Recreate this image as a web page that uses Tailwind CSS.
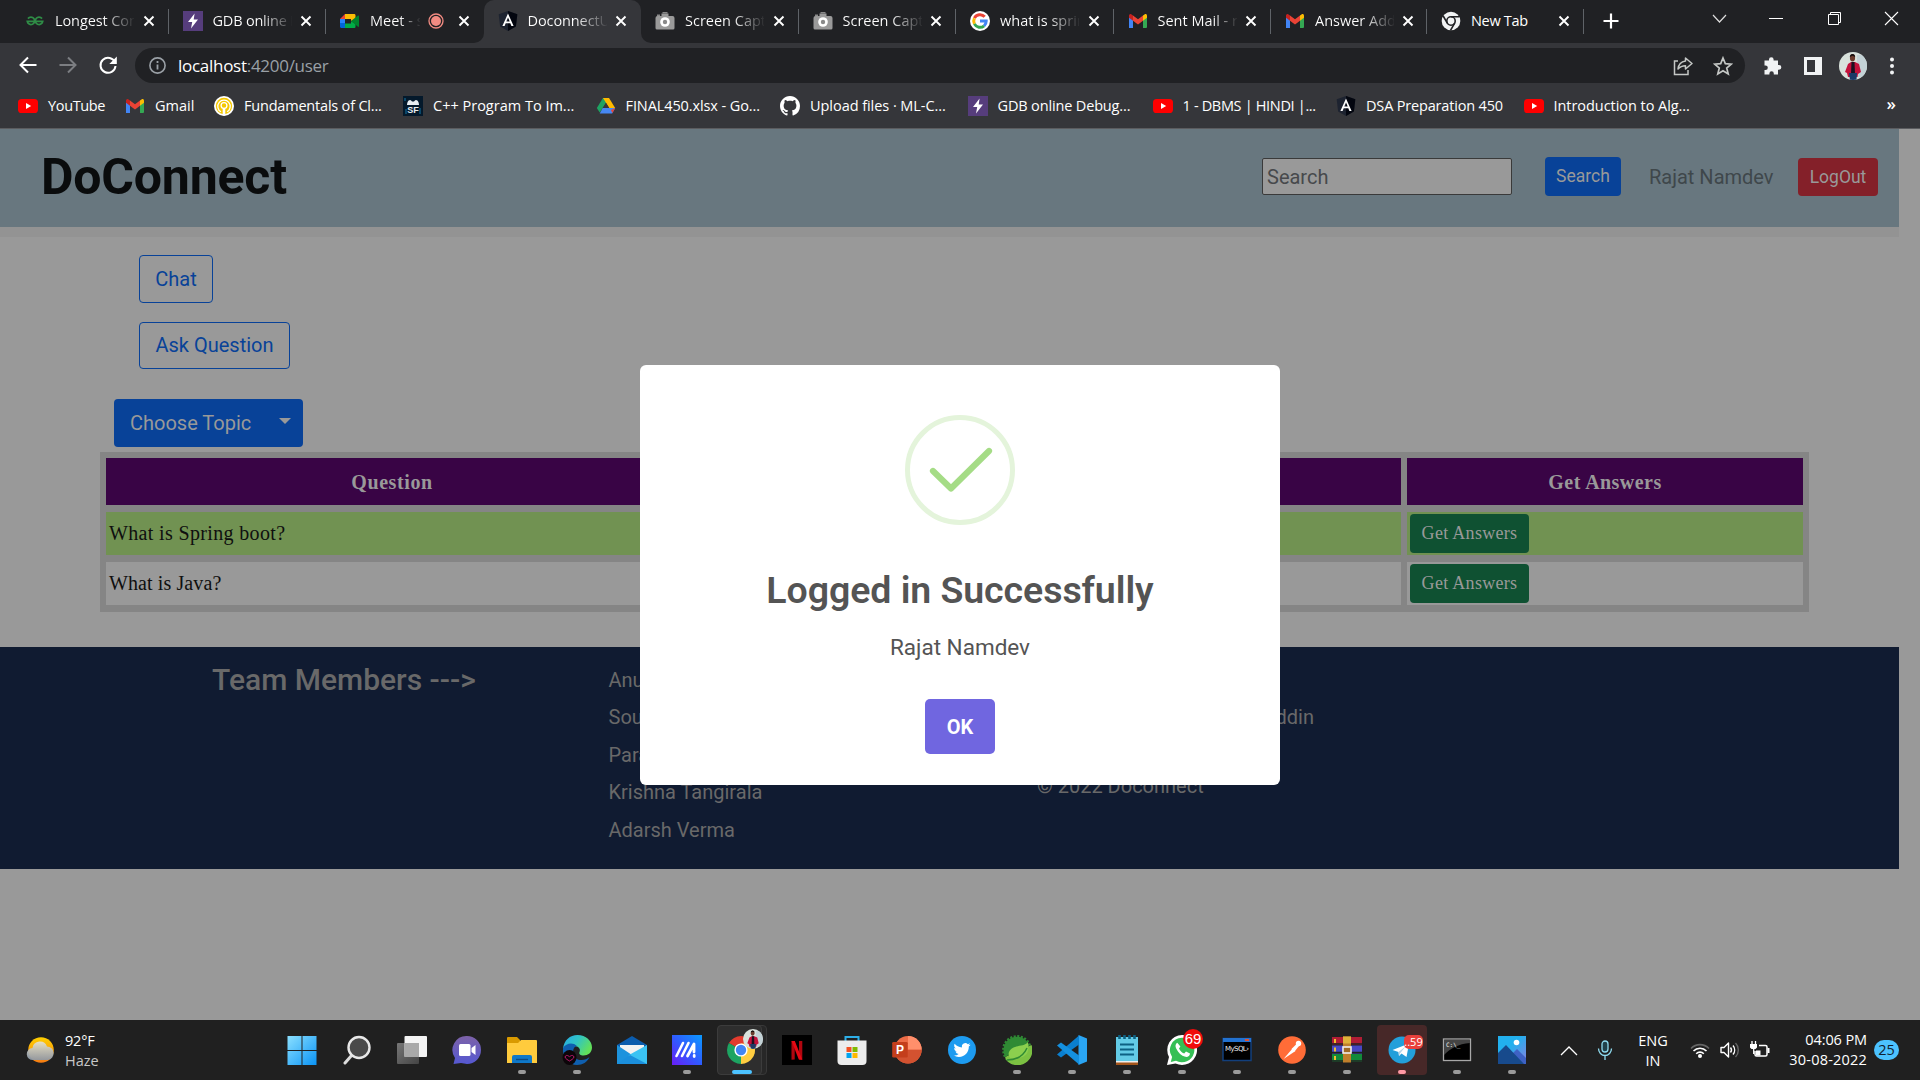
<!DOCTYPE html>
<html lang="en">
<head>
<meta charset="utf-8">
<title>DoconnectUI</title>
<script src="https://cdn.jsdelivr.net/npm/@tailwindcss/browser@4"></script>
</head>
<body class="w-[1920px] h-[1080px] overflow-hidden bg-[#999999] font-['Roboto',sans-serif] flex flex-col">

<svg class="hidden">
  <symbol id="x" viewBox="0 0 12 12"><path d="M1.500 1.500l9 9M10.500 1.500l-9 9" stroke="#fff" stroke-width="1.900" fill="none"/></symbol>
  <symbol id="gfg" viewBox="0 0 20 20"><path d="M3 7.600A3.700 3.700 0 1 1 2.300 10.400H17.700A3.700 3.700 0 1 1 17 7.600" fill="none" stroke="#2f8d46" stroke-width="1.800"/></symbol>
  <symbol id="bolt" viewBox="0 0 20 20"><path d="M0 0h20v20H0z" fill="#563d7c"/><path d="M11.600 2.500L5 11h4.200L8 17.500 15 8.600h-4.300z" fill="#fff"/></symbol>
  <symbol id="meet" viewBox="0 0 20 20"><path d="M5 3v5H0z" fill="#ea4335"/><path d="M5 3h9c1 0 1.500.5 1.500 1.500V8L11 10V8H5z" fill="#fbbc04"/><path d="M0 8h5v4.500H0z" fill="#2684fc"/><path d="M0 12h5v5H1.500C.6 17 0 16.400 0 15.500z" fill="#0066da"/><path d="M5 12.500h6V10l4.500 3v2.500c0 1-.5 1.500-1.500 1.500H5z" fill="#00ac47"/><path d="M11 10l7-5.500c.4-.3 1 0 1 .5v10.300c0 .5-.6.800-1 .5z" fill="#00832d"/></symbol>
  <symbol id="ng" viewBox="0 0 20 20"><path d="M10 0l9.300 3.300-1.400 12.200L10 20l-7.900-4.500L.7 3.300z" fill="#1d2330"/><path d="M10 0l9.300 3.300-1.400 12.200L10 20z" fill="#03060f"/><path d="M10 2.500L4.400 15h2.200l1.100-2.800h4.600l1.100 2.800h2.200zm0 4l1.700 4H8.300z" fill="#fff"/></symbol>
  <symbol id="cam" viewBox="0 0 20 20"><path d="M6.500 2.500h7V5h4a2 2 0 0 1 2 2v10a1.500 1.500 0 0 1-1.500 1.500H2A1.500 1.500 0 0 1 .5 17V7a2 2 0 0 1 2-2h4z" fill="#9a9a9a"/><circle cx="10" cy="11" r="4.800" fill="#fff"/><circle cx="10" cy="11" r="2.200" fill="#8a8a8a"/><path d="M7.500 1h5v1.500h-5zM2 3.600h3V5H2z" fill="#888"/></symbol>
  <symbol id="goog" viewBox="0 0 20 20"><circle cx="10" cy="10" r="10" fill="#fff"/><g fill="none" stroke-width="3"><path d="M14.700 5.800A6.300 6.300 0 0 0 4.400 7.200" stroke="#ea4335"/><path d="M4.400 7.200a6.300 6.300 0 0 0 0 5.700" stroke="#fbbc05"/><path d="M4.400 12.900a6.300 6.300 0 0 0 9.700 1.900" stroke="#34a853"/><path d="M14.100 14.800A6.300 6.300 0 0 0 16.200 10H10" stroke="#4285f4"/></g></symbol>
  <symbol id="gmail" viewBox="0 0 20 20"><path d="M1 17V5.500l4 3V17H2z" fill="#4285f4"/><path d="M15 17V8.500l4-3V16a1 1 0 0 1-1 1z" fill="#34a853"/><path d="M15 4.500l1.500-1.100c1.200-.8 2.500 0 2.500 1.300v2l-4 3z" fill="#fbbc04"/><path d="M5 9.700V4.500l5 3.800 5-3.800v5.200l-5 3.800z" fill="#ea4335"/><path d="M1 6.700v-2c0-1.300 1.400-2.200 2.500-1.300L5 4.500v5.200z" fill="#c5221f"/></symbol>
  <symbol id="chr" viewBox="0 0 20 20"><circle cx="10" cy="10" r="9.300" fill="#f1f3f4"/><circle cx="10" cy="10" r="4.200" fill="none" stroke="#202124" stroke-width="1.600"/><path d="M10 5.800h8.300M6.300 12.100L2.200 5M13.700 12.100L9.500 19.300" stroke="#202124" stroke-width="1.600"/></symbol>
  <symbol id="yt" viewBox="0 0 20 20"><rect y="3" width="20" height="14" rx="3.600" fill="#f00"/><path d="M8 7l5.200 3L8 13z" fill="#fff"/></symbol>
  <symbol id="fund" viewBox="0 0 20 20"><circle cx="10" cy="10" r="10" fill="#fff"/><circle cx="10" cy="10" r="8.200" fill="#f5c800"/><path d="M7 15.800A6.200 6.200 0 1 1 13 15.800" fill="none" stroke="#fff" stroke-width="1.300"/><circle cx="10" cy="9.500" r="2.900" fill="#f5c800" stroke="#fff" stroke-width="1.300"/><path d="M10 12v7.500" stroke="#fff" stroke-width="2.600"/></symbol>
  <symbol id="sf" viewBox="0 0 20 20"><path d="M0 0h20v20H0z" fill="#04192b"/><path d="M1 2h2v3H1zM16 12h2v6h-2zM2 13h2v5H2z" fill="#0a4768"/><path d="M4 9c0-2 1-5 3-5 1 0 2 1.500 2 1.500h2S12 4 13 4c2 0 3 3 3 5z" fill="#e8eef2"/><text x="10" y="16.800" font-family="Liberation Sans" font-weight="bold" font-size="9" fill="#e8eef2" text-anchor="middle">SF</text></symbol>
  <symbol id="drive" viewBox="0 0 20 20"><path d="M7 2h6l-6 9.500-3.300 5L.8 12z" fill="#1ea362"/><path d="M7 2h6l6.200 10h-6z" fill="#ffba00"/><path d="M3.700 17.500l3-5.500h12.500l-3 5.500z" fill="#4688f4"/><path d="M10 6.800l3.200 5.200H6.800z" fill="#35363a"/><path d="M15 14l4.200-2-2.800 5z" fill="#ea4335"/></symbol>
  <symbol id="gh" viewBox="0 0 16 16"><path fill="#fff" d="M8 0C3.580 0 0 3.580 0 8c0 3.540 2.290 6.530 5.470 7.590.4.070.55-.17.55-.38 0-.19-.01-.82-.01-1.490-2.010.37-2.530-.49-2.690-.94-.09-.23-.48-.94-.82-1.130-.28-.15-.68-.52-.01-.53.63-.01 1.080.58 1.230.82.72 1.210 1.870.87 2.330.66.07-.52.28-.87.51-1.070-1.780-.2-3.640-.89-3.640-3.950 0-.87.31-1.590.82-2.150-.08-.2-.36-1.020.08-2.120 0 0 .67-.21 2.200.82.64-.18 1.320-.27 2-.27s1.360.09 2 .27c1.530-1.040 2.200-.82 2.200-.82.44 1.100.16 1.920.08 2.120.51.56.82 1.270.82 2.150 0 3.070-1.870 3.750-3.650 3.950.29.25.54.73.54 1.480 0 1.070-.01 1.930-.01 2.200 0 .21.15.46.55.38A8.010 8.010 0 0 0 16 8c0-4.420-3.580-8-8-8z"/></symbol>
  <symbol id="man" viewBox="0 0 28 28"><path d="M0 0h28v28H0z" fill="#d9e2dc"/><path d="M18 3h10v22H18z" fill="#c3d2d6"/><path d="M9 12l3-2h4l4 2 2 8-3 2-.5 3H9l-1-4-2-1z" fill="#c3123b"/><path d="M12.500 10h3l.5 12h-4z" fill="#1c1020"/><path d="M10 21h8l-.5 7H11z" fill="#1b3a66"/><ellipse cx="13.500" cy="5.800" rx="2.600" ry="3.800" fill="#6b3b2c"/><path d="M10.800 5c0-4 5.400-4 5.400 0l-2.700-1.200z" fill="#150e0e"/></symbol>
</svg>

<!-- Tab strip -->
<div class="h-[43px] shrink-0 bg-[#202124] flex pl-[11px] font-['Open_Sans',sans-serif] text-[14.500px] text-white">
  <div class="w-[157.500px] h-[42px] shrink-0 flex items-center pl-[14px] relative">
    <svg class="size-5 shrink-0"><use href="#gfg"/></svg>
    <span class="ml-[10px] w-[79px] overflow-hidden whitespace-nowrap tracking-[-.1px] bg-clip-text text-transparent bg-linear-to-r from-white from-60% to-white/5">Longest Com</span>
    <svg class="size-3 absolute left-[131.500px]"><use href="#x"/></svg>
    <div class="absolute right-0 top-[9px] w-px h-[25px] bg-[#5f6368]"></div>
  </div>
  <div class="w-[157.500px] h-[42px] shrink-0 flex items-center pl-[14px] relative">
    <svg class="size-5 shrink-0"><use href="#bolt"/></svg>
    <span class="ml-[10px] w-[79px] overflow-hidden whitespace-nowrap tracking-[-.2px] bg-clip-text text-transparent bg-linear-to-r from-white from-60% to-white/5">GDB online D</span>
    <svg class="size-3 absolute left-[131.500px]"><use href="#x"/></svg>
    <div class="absolute right-0 top-[9px] w-px h-[25px] bg-[#5f6368]"></div>
  </div>
  <div class="w-[157.500px] h-[42px] shrink-0 flex items-center pl-[14px] relative">
    <svg class="size-5 shrink-0"><use href="#meet"/></svg>
    <span class="ml-[10px] w-[50px] overflow-hidden whitespace-nowrap bg-clip-text text-transparent bg-linear-to-r from-white from-60% to-white/5">Meet - s</span>
    <svg class="size-4 absolute left-[102px]" viewBox="0 0 16 16"><circle cx="8" cy="8" r="7" fill="none" stroke="#f28b82" stroke-width="1.300"/><circle cx="8" cy="8" r="5" fill="#f28b82"/></svg>
    <svg class="size-3 absolute left-[131.500px]"><use href="#x"/></svg>
  </div>
  <div class="w-[157.500px] shrink-0 relative bg-[#35363a] rounded-t-[10px] flex items-center pl-[14px] pb-px">
    <svg class="absolute bottom-0 -left-[10px] size-[10px]" viewBox="0 0 10 10"><path d="M10 0v10H0A10 10 0 0 0 10 0z" fill="#35363a"/></svg>
    <svg class="absolute bottom-0 -right-[10px] size-[10px]" viewBox="0 0 10 10"><path d="M0 0v10h10A10 10 0 0 1 0 0z" fill="#35363a"/></svg>
    <svg class="size-5 shrink-0"><use href="#ng"/></svg>
    <span class="ml-[10px] w-[79px] overflow-hidden whitespace-nowrap tracking-[-.1px] bg-clip-text text-transparent bg-linear-to-r from-white from-60% to-white/5">DoconnectUI</span>
    <svg class="size-3 absolute left-[131.500px]"><use href="#x"/></svg>
  </div>
  <div class="w-[157.500px] h-[42px] shrink-0 flex items-center pl-[14px] relative">
    <svg class="size-5 shrink-0"><use href="#cam"/></svg>
    <span class="ml-[10px] w-[79px] overflow-hidden whitespace-nowrap bg-clip-text text-transparent bg-linear-to-r from-white from-60% to-white/5">Screen Capt</span>
    <svg class="size-3 absolute left-[131.500px]"><use href="#x"/></svg>
    <div class="absolute right-0 top-[9px] w-px h-[25px] bg-[#5f6368]"></div>
  </div>
  <div class="w-[157.500px] h-[42px] shrink-0 flex items-center pl-[14px] relative">
    <svg class="size-5 shrink-0"><use href="#cam"/></svg>
    <span class="ml-[10px] w-[79px] overflow-hidden whitespace-nowrap bg-clip-text text-transparent bg-linear-to-r from-white from-60% to-white/5">Screen Capt</span>
    <svg class="size-3 absolute left-[131.500px]"><use href="#x"/></svg>
    <div class="absolute right-0 top-[9px] w-px h-[25px] bg-[#5f6368]"></div>
  </div>
  <div class="w-[157.500px] h-[42px] shrink-0 flex items-center pl-[14px] relative">
    <svg class="size-5 shrink-0"><use href="#goog"/></svg>
    <span class="ml-[10px] w-[79px] overflow-hidden whitespace-nowrap bg-clip-text text-transparent bg-linear-to-r from-white from-60% to-white/5">what is sprin</span>
    <svg class="size-3 absolute left-[131.500px]"><use href="#x"/></svg>
    <div class="absolute right-0 top-[9px] w-px h-[25px] bg-[#5f6368]"></div>
  </div>
  <div class="w-[157.500px] h-[42px] shrink-0 flex items-center pl-[14px] relative">
    <svg class="size-5 shrink-0"><use href="#gmail"/></svg>
    <span class="ml-[10px] w-[79px] overflow-hidden whitespace-nowrap bg-clip-text text-transparent bg-linear-to-r from-white from-70% to-white/5">Sent Mail - r</span>
    <svg class="size-3 absolute left-[131.500px]"><use href="#x"/></svg>
    <div class="absolute right-0 top-[9px] w-px h-[25px] bg-[#5f6368]"></div>
  </div>
  <div class="w-[156px] h-[42px] shrink-0 flex items-center pl-[14px] relative">
    <svg class="size-5 shrink-0"><use href="#gmail"/></svg>
    <span class="ml-[10px] w-[79px] overflow-hidden whitespace-nowrap bg-clip-text text-transparent bg-linear-to-r from-white from-60% to-white/5">Answer Add</span>
    <svg class="size-3 absolute left-[130.500px]"><use href="#x"/></svg>
    <div class="absolute right-0 top-[9px] w-px h-[25px] bg-[#5f6368]"></div>
  </div>
  <div class="w-[157px] h-[42px] shrink-0 flex items-center pl-[14px] relative">
    <svg class="size-5 shrink-0"><use href="#chr"/></svg>
    <span class="ml-[10px] whitespace-nowrap tracking-[-.3px]">New Tab</span>
    <svg class="size-3 absolute left-[131px]"><use href="#x"/></svg>
    <div class="absolute right-0 top-[9px] w-px h-[25px] bg-[#5f6368]"></div>
  </div>
  <div class="flex items-center pl-[19px] h-[42px]"><svg class="size-4" viewBox="0 0 16 16"><path d="M8 .5v15M.5 8h15" stroke="#fff" stroke-width="2.200"/></svg></div>
  <div class="flex-1 flex justify-end h-[37px] items-center pr-[21px] gap-[42.500px]">
    <svg class="size-[15px]" viewBox="0 0 15 15"><path d="M1 4l6.500 7L14 4" fill="none" stroke="#ddd" stroke-width="1.200"/></svg>
    <svg class="size-[15px]" viewBox="0 0 15 15"><path d="M0 7.500h14" stroke="#fff"/></svg>
    <svg class="size-[15px]" viewBox="0 0 15 15"><path d="M1.500 3.500h10v10h-10zM3.500 3.500v-2h10v10h-2" fill="none" stroke="#fff"/></svg>
    <svg class="size-[15px]" viewBox="0 0 15 15"><path d="M1 1l13 13M14 1L1 14" stroke="#fff" stroke-width="1.100"/></svg>
  </div>
</div>

<!-- Toolbar -->
<div class="h-[45px] shrink-0 bg-[#35363a] flex items-center pl-[18px] font-['Open_Sans',sans-serif]">
  <svg class="size-5 -mt-[2px]" viewBox="0 0 20 20"><path d="M18.500 10H3M10 2.500L2.500 10l7.500 7.500" fill="none" stroke="#fff" stroke-width="2"/></svg>
  <svg class="size-5 ml-[20px] -mt-[2px]" viewBox="0 0 20 20"><path d="M1.500 10H17M10 2.500l7.500 7.500-7.500 7.500" fill="none" stroke="#7c7e82" stroke-width="2"/></svg>
  <svg class="size-5 ml-[20px] -mt-[2px]" viewBox="0 0 20 20"><path d="M17 7.500A7.500 7.500 0 1 0 17.500 11" fill="none" stroke="#fff" stroke-width="2"/><path d="M18.800 1.500v7.500h-7.500z" fill="#fff"/></svg>
  <div class="ml-[17px] w-[1610px] h-[35px] rounded-full bg-[#202124] flex items-center pl-[14px] pr-[12px]">
    <svg class="size-[17px]" viewBox="0 0 17 17"><circle cx="8.500" cy="8.500" r="7.600" fill="none" stroke="#9aa0a6" stroke-width="1.600"/><path d="M8.500 7.500v5M8.500 4v2" stroke="#9aa0a6" stroke-width="1.800"/></svg>
    <span class="ml-3 text-[17px] tracking-[-.28px] text-[#9aa0a6]"><span class="text-white">localhost</span>:4200/user</span>
    <span class="flex-1"></span>
    <svg class="size-5" viewBox="0 0 20 20"><path d="M5 5H1.500v13.500H15V14" fill="none" stroke="#c4c7c5" stroke-width="1.500"/><path d="M12.500 2l6.500 5.500-6.500 5.500v-3.300c-3.500 0-5.500 1-7.500 3.300.5-4.500 3-7.300 7.500-8z" fill="none" stroke="#c4c7c5" stroke-width="1.500" stroke-linejoin="round"/></svg>
    <svg class="size-5 ml-5" viewBox="0 0 20 20"><path d="M10 2l2.300 5.600 6 .5-4.600 3.900 1.500 5.900-5.200-3.200-5.200 3.200 1.500-5.900L1.700 8.100l6-.5z" fill="none" stroke="#c4c7c5" stroke-width="1.700"/></svg>
  </div>
  <svg class="size-5 ml-[17px]" viewBox="0 0 20 20"><path d="M7 3.500a2.300 2.300 0 0 1 4.600 0V4.500H16V9h1a2.300 2.300 0 0 1 0 4.700H16V18.500h-4.200v-1a2.200 2.200 0 0 0-4.400 0v1H2.500V14h1a2.300 2.300 0 0 0 0-4.600h-1V4.500H7z" fill="#f1f3f4"/></svg>
  <svg class="size-5 ml-[21px]" viewBox="0 0 20 20"><path d="M1 1h18v18H1zM4 4v12h8V4z" fill="#f1f3f4" fill-rule="evenodd"/></svg>
  <svg class="size-7 ml-[16px] rounded-full"><use href="#man"/></svg>
  <svg class="w-1.5 h-5 ml-[22px]" viewBox="0 0 6 20"><circle cx="3" cy="3.500" r="2" fill="#f1f3f4"/><circle cx="3" cy="10" r="2" fill="#f1f3f4"/><circle cx="3" cy="16.500" r="2" fill="#f1f3f4"/></svg>
</div>

<!-- Bookmarks -->
<div class="h-[41px] shrink-0 bg-[#35363a] border-b border-[#5b5c5f] flex items-center pl-[18px] pb-[5px] font-['Open_Sans',sans-serif] text-[14.500px] text-white whitespace-nowrap [&_svg]:size-5 [&_svg]:shrink-0 [&_svg]:mr-[10px]">
  <svg><use href="#yt"/></svg><div class="w-[77px] tracking-[-.35px]">YouTube</div>
  <svg><use href="#gmail"/></svg><div class="w-[59px]">Gmail</div>
  <svg><use href="#fund"/></svg><div class="w-[159px] tracking-[-.2px]">Fundamentals of Cl...</div>
  <svg><use href="#sf"/></svg><div class="w-[162.500px]">C++ Program To Im...</div>
  <svg><use href="#drive"/></svg><div class="w-[154.500px] tracking-[-.1px]">FINAL450.xlsx - Go...</div>
  <svg><use href="#gh"/></svg><div class="w-[157.500px] tracking-[-.05px]">Upload files · ML-C...</div>
  <svg><use href="#bolt"/></svg><div class="w-[155px] tracking-[-.15px]">GDB online Debug...</div>
  <svg><use href="#yt"/></svg><div class="w-[153.500px] tracking-[-.33px]">1 - DBMS | HINDI |...</div>
  <svg><use href="#ng"/></svg><div class="w-[157.500px] tracking-[-.17px]">DSA Preparation 450</div>
  <svg><use href="#yt"/></svg><div class="w-[137px] tracking-[-.05px]">Introduction to Alg...</div>
  <span class="flex-1"></span><span class="pr-6 text-[17px] font-semibold -mt-1">»</span>
</div>

<!-- Page -->
<main class="relative h-[891px] shrink-0 text-[20px] leading-[30px]">
  <div class="w-[1899px]">
    <header class="h-[98px] bg-[#68777f] flex items-center pl-[41px] pr-[21px] pb-[3px]">
      <h1 class="text-[50px] font-bold tracking-[-.2px] text-[#0a0c0d]">DoConnect</h1>
      <span class="flex-1"></span>
      <div class="w-[250px] h-[37px] bg-[#999999] border border-[#3a3a3a] rounded-[2px] px-1 flex items-center text-[#47494c]">Search</div>
      <div class="ml-[33px] w-[76px] h-[39px] bg-[#084298] rounded-[4px] text-[#999] text-[17.500px] flex items-center justify-center pb-px">Search</div>
      <div class="ml-[28px] w-[149px] text-[#3f474b]">Rajat Namdev</div>
      <div class="w-[80px] h-[38px] bg-[#842029] rounded-[4px] text-[#999] text-[17.500px] flex items-center justify-center">LogOut</div>
    </header>
    <div class="h-[10px] bg-[#939393]"></div>
    <div class="pt-[18px] pl-[139px] flex flex-col items-start">
      <div class="w-[74px] h-[48px] border border-[#084298] rounded-[4px] text-[#084298] flex items-center justify-center">Chat</div>
      <div class="mt-[19px] w-[151px] h-[47px] border border-[#084298] rounded-[4px] text-[#084298] flex items-center justify-center pb-px">Ask Question</div>
    </div>
    <div class="mt-[30px] ml-[114px] w-[189px] h-[48px] bg-[#084298] rounded-[4px] text-[#999] flex items-center pl-[16px] pr-[12px]">
      <span>Choose Topic</span><span class="flex-1"></span>
      <svg class="w-3 h-1.5 -mt-1" viewBox="0 0 12 6"><path d="M0 0h12L6 6z" fill="#999"/></svg>
    </div>
    <div class="mt-[5px] ml-[100px] w-[1709px] h-[160px] bg-[#858585] p-[6px] pb-[7px] grid grid-cols-[572px_717px_396px] grid-rows-[47px_43px_43px] gap-x-[6px] gap-y-[7px] font-['Liberation_Serif',serif] text-[#0f0f0f]">
      <div class="bg-[#390445] text-[#999] font-bold tracking-[.6px] flex items-center justify-center">Question</div>
      <div class="bg-[#390445]"></div>
      <div class="bg-[#390445] text-[#999] font-bold tracking-[.45px] flex items-center justify-center">Get Answers</div>
      <div class="bg-[#719252] flex items-center pl-[3px] pb-[2px] tracking-[.35px]">What is Spring boot?</div>
      <div class="bg-[#719252]"></div>
      <div class="bg-[#719252] p-[2px] pl-[3px]"><div class="w-[119px] h-[39px] rounded-[4px] bg-[#0f5132] text-[#999] text-[18px] tracking-[.3px] flex items-center justify-center pb-[2px]">Get Answers</div></div>
      <div class="bg-[#999999] flex items-center pl-[3px] pb-[2px] tracking-[.1px]">What is Java?</div>
      <div class="bg-[#999999]"></div>
      <div class="bg-[#999999] p-[2px] pl-[3px]"><div class="w-[119px] h-[39px] rounded-[4px] bg-[#0f5132] text-[#999] text-[18px] tracking-[.3px] flex items-center justify-center pb-[2px]">Get Answers</div></div>
    </div>
    <footer class="mt-[35px] h-[222px] bg-[#101b31] text-[#696969] flex pt-[17.600px]">
      <h2 class="pl-[212px] w-[608.500px] text-[30px] font-medium">Team Members ---&gt;</h2>
      <div class="w-[428.500px] flex flex-col gap-[7.500px]"><div>Anu</div><div>Sou</div><div>Para</div><div>Krishna Tangirala</div><div>Adarsh Verma</div></div>
      <div class="w-[277px]">
        <div class="mt-[37.500px] text-right">ddin</div>
        <div class="mt-[39.400px]">© 2022 Doconnect</div>
      </div>
    </footer>
  </div>

  <!-- Dialog -->
  <div class="absolute left-[640px] top-[236px] w-[640px] h-[420px] bg-white rounded-[6px] flex flex-col items-center text-[#545454]">
    <svg class="mt-[50px] size-[110px] shrink-0" viewBox="0 0 110 110"><circle cx="55" cy="55" r="52.500" fill="none" stroke="#e4f4db" stroke-width="5"/><path d="M28 56l18 17.500L84 36" fill="none" stroke="#a5dc86" stroke-width="6.200" stroke-linecap="round" stroke-linejoin="round"/></svg>
    <div class="mt-[43px] text-[37.500px] leading-[45px] font-semibold tracking-[-.07px]">Logged in Successfully</div>
    <div class="mt-[19px] text-[22.500px]">Rajat Namdev</div>
    <div class="mt-[37px] w-[70px] h-[55px] rounded-[5px] bg-[#7066e0] text-white font-bold flex items-center justify-center">OK</div>
  </div>
</main>

<!-- Taskbar -->
<div class="relative h-[60px] shrink-0 bg-[#202020] text-white font-['Open_Sans',sans-serif] text-[14.500px] leading-5 flex items-center">
  <svg class="ml-[25px] w-[31px] h-[30px]" viewBox="0 0 31 30"><defs><linearGradient id="sun" y2="1" x2="0"><stop stop-color="#ffd000"/><stop offset="1" stop-color="#f57c14"/></linearGradient><linearGradient id="cl" y2="1" x2="0"><stop stop-color="#e5e2d2"/><stop offset="1" stop-color="#8e9aa8"/></linearGradient></defs><circle cx="16" cy="15" r="12.800" fill="url(#sun)"/><path d="M8 25a6 6 0 0 1-.5-12A7.500 7.500 0 0 1 22 11.500a6.800 6.800 0 0 1 1 13.500z" fill="url(#cl)" opacity=".93"/></svg>
  <div class="ml-[9px] w-[210px] leading-[20px] pt-px"><div class="tracking-[-.2px]">92°F</div><div class="text-[#c8c8c8]">Haze</div></div>

  <div class="absolute left-[274.500px] top-0 h-[60px] flex [&>div]:w-[55px] [&>div]:h-[60px] [&>div]:flex [&>div]:items-center [&>div]:justify-center [&>div]:relative [&_i]:absolute [&_i]:bottom-[6px] [&_i]:h-1 [&_i]:w-2 [&_i]:rounded-full [&_i]:bg-[#9a9a9a]">
    <div><svg class="size-[30px]" viewBox="0 0 30 30"><defs><linearGradient id="w" x2="1" y2="1"><stop stop-color="#8be0ff"/><stop offset="1" stop-color="#0a93f5"/></linearGradient></defs><path d="M.5 1h14v14h-14zM15.500 1h14v14h-14zM.5 16h14v14h-14zM15.500 16h14v14h-14z" fill="url(#w)"/></svg></div>
    <div><svg class="size-[30px]" viewBox="0 0 30 30"><path d="M10 20L3 28" stroke="#ddd" stroke-width="3" stroke-linecap="round"/><circle cx="17" cy="12.500" r="10.500" fill="#4a4a4a" stroke="#e8e8e8" stroke-width="2.400"/></svg></div>
    <div><svg class="size-[30px]" viewBox="0 0 30 30"><defs><linearGradient id="tv" x2="1" y2="1"><stop stop-color="#777"/><stop offset="1" stop-color="#444"/></linearGradient></defs><rect y="8" width="22" height="21" rx="1" fill="url(#tv)"/><rect x="7.500" y="1" width="22.500" height="21" rx="1" fill="#f4f4f4"/><path d="M7.500 8H22v14H7.500z" fill="#a9a9a9"/></svg></div>
    <div><svg class="size-[30px]" viewBox="0 0 30 30"><defs><linearGradient id="ct" y2="1" x2="0"><stop stop-color="#7d62a8"/><stop offset="1" stop-color="#5558d2"/></linearGradient></defs><path d="M15 1a14 14 0 0 1 0 28l-6-1-7.500 1 1.500-6A14 14 0 0 1 15 1z" fill="url(#ct)"/><rect x="7" y="9" width="11.500" height="12" rx="1.500" fill="#fff"/><path d="M19.500 13l4-3v10l-4-3z" fill="#fff"/></svg></div>
    <div><svg class="size-[30px]" viewBox="0 0 30 30"><path d="M0 3a1 1 0 0 1 1-1h9l3 3v5H0z" fill="#d99a00"/><path d="M0 8h11l3-3h15a1 1 0 0 1 1 1v22H0z" fill="#ffcb3d"/><path d="M5 28v-6a2 2 0 0 1 2-2h16a2 2 0 0 1 2 2v6z" fill="#0f78c8"/><path d="M9 24.500h12" stroke="#0a4a85" stroke-width="1.400"/></svg><i></i></div>
    <div><svg class="size-[30px]" viewBox="0 0 30 30"><defs><linearGradient id="e" x2="1" y2=".5"><stop stop-color="#28a8ea"/><stop offset=".5" stop-color="#30c4c4"/><stop offset="1" stop-color="#62e05a"/></linearGradient></defs><path d="M1 14C2 5 8 0 15.500 0 24 0 30 6 30 12.500c0 5-4 8-8.500 8-3 0-5-1.500-4-3.500 1.500-3-1-6-5.500-6-5 0-9 3-11 7z" fill="url(#e)"/><path d="M1 13c3-5 10-6 14-2-6 1-5 13 3 14 4 .5 7-1 9.500-3-2 5-7 8-12.500 8C7 30 0 22 1 13z" fill="#0f5faf"/><ellipse cx="7.500" cy="22.500" rx="7" ry="7.500" fill="#0c0509"/><path d="M3 22c1-3 4-1 4.500 0 .5-1 3.500-3 4.500 0-.5 2-3 3-4.500 4C6 25 3.500 24 3 22z" fill="none" stroke="#c0186f"/></svg><i></i></div>
    <div><svg class="size-[30px]" viewBox="0 0 30 30"><path d="M0 10L15 1l15 9v3H0z" fill="#0b5cad"/><path d="M3 10h24v9H3z" fill="#f2f2f2"/><path d="M0 10l15 10v9H0z" fill="#1d93dd"/><path d="M30 10v19H9l3-9z" fill="#3bc3f3"/><path d="M0 29l13-9 17 9z" fill="#1b8fdc"/></svg></div>
    <div><svg class="size-[30px]" viewBox="0 0 30 30"><defs><linearGradient id="ma" x1="0" y1="1" x2="1" y2="0"><stop stop-color="#6a1cf5"/><stop offset=".5" stop-color="#2f5cff"/><stop offset="1" stop-color="#0a9bff"/></linearGradient></defs><path d="M0 0h30v30H0z" fill="url(#ma)"/><path d="M4.500 21L11 8M10 21l6.500-13" stroke="#fff" stroke-width="2.600" stroke-linecap="round"/><path d="M15.500 21L22 9v8M22.200 20.500v1" stroke="#fff" stroke-width="2.800" fill="none" stroke-linecap="round" stroke-linejoin="round"/></svg><i></i></div>
    <div>
      <span class="absolute top-[5px] left-[6px] w-[46px] h-[50px] rounded-[4px] bg-[#272727] border border-[#383838]"></span>
      <span class="absolute top-[5px] left-[2.500px] w-[45px] h-[50px] rounded-[4px] bg-[#2e2e2e] border border-[#3c3c3c]"></span>
      <svg class="size-[28px] relative -left-[1px]" viewBox="0 0 28 28"><path d="M14 14L1.900 7A14 14 0 0 1 26.100 7z" fill="#e33b2e"/><path d="M14 14l12.100-7A14 14 0 0 1 14 28z" fill="#ffcd40"/><path d="M14 14v14A14 14 0 0 1 1.900 7z" fill="#1da462"/><path d="M14 7.500h12.400a14 14 0 0 1-.4 13L20 18z" fill="#ffcd40"/><circle cx="14" cy="14" r="6.600" fill="#fff"/><circle cx="14" cy="14" r="5.200" fill="#4285f4"/></svg>
      <svg class="absolute left-[28px] top-[9px] size-5 rounded-full"><use href="#man"/></svg>
      <i class="w-5! bg-[#4cc2ff]!"></i></div>
    <div><svg class="size-[30px]" viewBox="0 0 30 30"><path d="M0 0h30v30H0z" fill="#000"/><path d="M9.500 6h3.200v18.500l-3.200.3zM17 6h3.300v18.800l-3.300-.3z" fill="#b1060f"/><path d="M9.500 6h3.300l7.500 18.800-3.500-.4z" fill="#e50914"/></svg></div>
    <div><svg class="size-[30px]" viewBox="0 0 30 30"><path d="M8.500 6V2h13v4" fill="none" stroke="#2dafe8" stroke-width="2"/><path d="M.5 5.500h29V26a4 4 0 0 1-4 4h-21a4 4 0 0 1-4-4z" fill="#ececec"/><path d="M9.500 12h5v5h-5z" fill="#f25022"/><path d="M15.500 12h5v5h-5z" fill="#7fba00"/><path d="M9.500 18h5v5h-5z" fill="#00a4ef"/><path d="M15.500 18h5v5h-5z" fill="#ffb900"/></svg></div>
    <div><svg class="size-[30px]" viewBox="0 0 30 30"><circle cx="16" cy="14.800" r="13.700" fill="#ed6c47"/><path d="M16 1.100a13.700 13.700 0 0 1 13.700 13.700H16z" fill="#ff8f6b"/><path d="M2.300 14.800h27.400a13.700 13.700 0 0 1-27.400 0z" fill="#d35230"/><rect x=".2" y="7" width="15.500" height="15.500" rx="1.300" fill="#c43e1c"/><text x="8" y="19" font-family="Liberation Sans" font-weight="bold" font-size="12" fill="#fff" text-anchor="middle">P</text></svg></div>
    <div><svg class="size-[30px]" viewBox="0 0 30 30"><circle cx="15" cy="15" r="14" fill="#1d9bf0"/><path transform="translate(6.500 6.500) scale(.71)" d="M23.950 4.570a10 10 0 0 1-2.820.77 4.960 4.960 0 0 0 2.160-2.720c-.95.550-2 .960-3.130 1.180a4.920 4.920 0 0 0-8.380 4.480C7.690 8.090 4.070 6.130 1.640 3.160a4.820 4.820 0 0 0-.67 2.480c0 1.710.87 3.210 2.190 4.100a4.900 4.900 0 0 1-2.230-.62v.06a4.920 4.920 0 0 0 3.950 4.830 5 5 0 0 1-2.210.08 4.940 4.940 0 0 0 4.600 3.420A9.870 9.870 0 0 1 0 19.540a13.990 13.990 0 0 0 7.560 2.210c9.050 0 14-7.500 14-13.980 0-.210 0-.420-.02-.630A9.940 9.940 0 0 0 24 4.590z" fill="#fff"/></svg></div>
    <div><svg class="size-[30px]" viewBox="0 0 30 30"><circle cx="15" cy="15" r="13.400" fill="none" stroke="#2f8a34" stroke-width="3" stroke-dasharray="2 1.500"/><path d="M29.500 10A15 15 0 0 1 5 26L3 22z" fill="#7cc142"/><path d="M3.500 22A13 13 0 0 1 26 8z" fill="#2f8a34"/><path d="M26 7c-3 4-8 3-13 5-6 2-8 7-5 11 8 1 18 0 18.500-10 0-2 0-4-.5-6z" fill="#8bcf4e"/><path d="M5 25c8 0 16-3 20-12" fill="none" stroke="#2f8a34" stroke-width="1.500"/></svg><i></i></div>
    <div><svg class="size-[30px]" viewBox="0 0 30 30"><path d="M21.500 0L30 3.500v23L21.500 30z" fill="#2aa5f3"/><path d="M22 .5v9L4 22.500 0 19.500z" fill="#0a7fcf"/><path d="M22 29.500v-9L4 7.500 0 10.500z" fill="#1490df"/></svg><i></i></div>
    <div><svg class="size-[30px]" viewBox="0 0 30 30"><path d="M4 25h22v5H4z" fill="#a3551b"/><path d="M4 25h22v2.500H4z" fill="#eee"/><path d="M4 2h22v24H4z" fill="#63cbe6"/><path d="M8 9.500h14M8 14.500h14M8 19.500h14" stroke="#0d6183" stroke-width="1.800"/><path d="M7.500 0v4M12.500 0v4M17.500 0v4M22.500 0v4" stroke="#0d6183" stroke-width="2.600"/></svg><i></i></div>
    <div><svg class="size-[30px]" viewBox="0 0 30 30"><path d="M15 0a15 15 0 1 1-6.500 28.500L0 30l2-8A15 15 0 0 1 15 0z" fill="#fff"/><path d="M15 2.700A12.300 12.300 0 1 1 9 25.700L3.800 27l1.300-5A12.300 12.300 0 0 1 15 2.700z" fill="#35bf55"/><path d="M10.300 7.800c-2 1-2.300 3.500-1 6 2 4 5 7 9 8 2.500.5 4.500-.8 4.700-3.300l-4-2-1.800 2c-2.400-.9-4.200-2.700-5.200-5l1.400-2z" fill="#fff"/></svg><span class="absolute left-[28.500px] top-[9px] size-5 rounded-full bg-[#f00c0c] font-['Liberation_Sans',sans-serif] text-[15px] text-center">69</span><i></i></div>
    <div><svg class="size-[30px]" viewBox="0 0 30 30"><rect x="1" y="3.500" width="28" height="22" fill="#000" stroke="#123f7c" stroke-width="1.500"/><path d="M1 3h28v4H1z" fill="#2372d0"/><path d="M23 4h4v2h-4z" fill="#e05030"/><text x="3" y="15.500" font-family="DejaVu Sans" font-size="7" fill="#eee" textLength="24">MySQL›</text></svg><i></i></div>
    <div><svg class="size-[30px]" viewBox="0 0 30 30"><circle cx="15" cy="15" r="13.800" fill="#ff6c37"/><path d="M6.500 24l9-10.500 3 2.500z" fill="#fff"/><path d="M14.500 14l5-5 2.500 2-4.500 5.500z" fill="#fff"/><circle cx="21.500" cy="8.500" r="2.700" fill="#fff"/></svg><i></i></div>
    <div><svg class="size-[30px]" viewBox="0 0 30 30"><rect y="2" width="30" height="8" fill="#b01d35"/><rect y="10.500" width="30" height="8" fill="#4747c4"/><rect y="19" width="30" height="8" fill="#128a3a"/><path d="M0 9h30M0 17.500h30M0 26h30" stroke="#222" stroke-width="1.500"/><path d="M3 4v4M3 12.500v4M3 21v4" stroke="#f0c030" stroke-width="2"/><path d="M11 1.500h8v26h-8z" fill="#c07f2b"/><path d="M11 1.500h8v7h-8z" fill="#dfb23a"/><rect x="11" y="12" width="8" height="6" fill="#a06a25" stroke="#eee" stroke-width="1.600"/></svg><i></i></div>
    <div><span class="absolute left-[2.500px] top-[5px] size-[50px] rounded-[4px] bg-[#472828]"></span><svg class="size-[28px] relative" viewBox="0 0 28 28"><circle cx="14" cy="14" r="13.500" fill="#239fda"/><path d="M4.500 14L21 7.500 18.500 21l-5-3.500-2.500 2.500-.5-4z" fill="#fff"/><path d="M10.500 16l7-5.500-5.500 7-1 2.500z" fill="#b5d3e6"/></svg><span class="absolute left-[29.500px] top-[15px] h-[14px] w-[19px] rounded-[5px] bg-[#e8403c] text-[11px] leading-[14px] text-center">..59</span><i class="bg-[#ff99a4]!"></i></div>
    <div><svg class="size-[30px]" viewBox="0 0 30 30"><rect x="1.500" y="4" width="27" height="21.500" fill="#000" stroke="#a8a8a8" stroke-width="1.300"/><path d="M2 5h26v3C16 9 9 13 2 20z" fill="#444"/><text x="4" y="12" font-family="DejaVu Sans Mono" font-size="6" fill="#eee">C:\_</text></svg><i></i></div>
    <div><svg class="size-[30px]" viewBox="0 0 30 30"><defs><linearGradient id="ph" x2="1" y2="1"><stop offset=".4" stop-color="#22b0ee"/><stop offset="1" stop-color="#8a7fe0"/></linearGradient></defs><path d="M1 1h28v28H1z" fill="url(#ph)"/><path d="M13 21l7-7 9 9v6H13z" fill="#3e62c4"/><path d="M1 18l8-8 18 19H1z" fill="#174a8c"/><circle cx="19.500" cy="7.500" r="2.800" fill="#fff"/></svg><i></i></div>
  </div>

  <span class="flex-1"></span>
  <svg class="w-[18px] h-[11px]" viewBox="0 0 18 11"><path d="M1 10l8-8 8 8" fill="none" stroke="#fff" stroke-width="1.300"/></svg>
  <svg class="ml-[19px] w-4 h-5" viewBox="0 0 16 20"><rect x="5" y="1" width="6" height="11" rx="3" fill="#21414a" stroke="#8fdcf0" stroke-width="1.300"/><path d="M1.500 8.500a6.500 7 0 0 0 13 0M8 16v4" fill="none" stroke="#8fdcf0" stroke-width="1.300"/></svg>
  <div class="ml-[15px] w-[50px] text-center leading-[20px] mr-[12px] pt-px"><div>ENG</div><div>IN</div></div>
  <svg class="w-5 h-[16px]" viewBox="0 0 20 16"><g fill="none" stroke-width="1.600"><path d="M1 6.500a12.500 12.500 0 0 1 18 0" stroke="#666"/><path d="M3.500 9a9 9 0 0 1 13 0M6.200 11.700a5.300 5.300 0 0 1 7.600 0" stroke="#fff"/></g><circle cx="10" cy="14" r="2" fill="#fff"/></svg>
  <svg class="ml-[10px] w-5 h-[18px]" viewBox="0 0 20 18"><path d="M1 6.500h3L8.500 2v14L4 11.500H1z" fill="none" stroke="#fff" stroke-width="1.400" stroke-linejoin="round"/><path d="M10.500 6.500a4 4 0 0 1 0 5M13 4.500a7 7 0 0 1 0 9" fill="none" stroke="#fff" stroke-width="1.400"/><path d="M15.500 2a10 10 0 0 1 0 14" fill="none" stroke="#666" stroke-width="1.400"/></svg>
  <svg class="ml-[10px] w-5 h-[18px]" viewBox="0 0 20 18"><path d="M9 4.500h6.500A1.500 1.500 0 0 1 17 6v7.500A1.500 1.500 0 0 1 15.500 15h-9A1.500 1.500 0 0 1 5 13.500V10" fill="none" stroke="#fff" stroke-width="1.500"/><path d="M17.500 7h2v5h-2zM6 9.500h4.500v5H6zM0 3h7v3.500L5.500 8h-4L0 6.500z" fill="#fff"/><path d="M2 0v4M5.500 0v4M3.700 8v5" stroke="#fff" stroke-width="1.300"/></svg>
  <div class="w-[97px] text-right leading-[20px] whitespace-nowrap pb-px"><div class="tracking-[-.1px]">04:06 PM</div><div class="tracking-[.2px]">30-08-2022</div></div>
  <span class="ml-[7px] mr-[21px] w-[25px] h-5 rounded-full bg-[#4cc2ff] text-[#102030] text-center leading-5">25</span>
</div>
</body>
</html>
